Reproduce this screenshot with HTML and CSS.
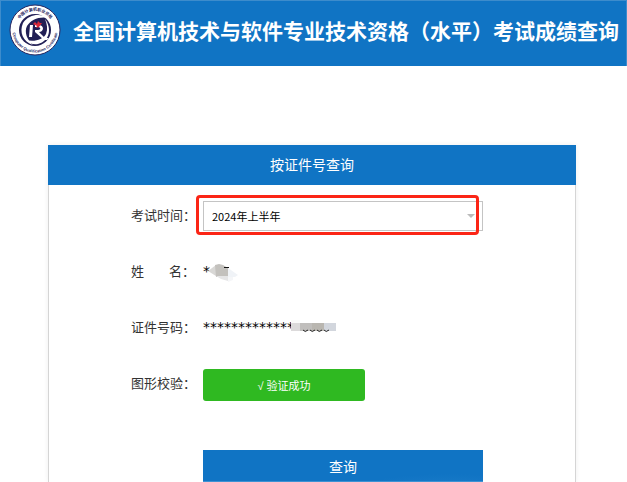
FILE: index.html
```html
<!DOCTYPE html>
<html lang="zh-CN">
<head>
<meta charset="utf-8">
<title>考试成绩查询</title>
<link rel="stylesheet" href="styles.css">
</head>
<body>
<header class="banner">
  <svg class="logo" viewBox="0 0 52 52" aria-hidden="true">
    <defs>
      <path id="arc-top" d="M7 26 A19 19 0 0 1 45 26"/>
      <path id="arc-bottom" d="M5 18 A22.500 22.500 0 1 0 47 18"/>
    </defs>
    <circle cx="26" cy="26" r="25" fill="#fff" stroke="#29265f" stroke-width="1"/>
    <circle cx="26" cy="26" r="16" fill="#211f55"/>
    <text class="ring ring-cn"><textPath href="#arc-top" startOffset="50%" text-anchor="middle">中国计算机职业资格</textPath></text>
    <text class="ring ring-en"><textPath href="#arc-bottom" startOffset="50%" text-anchor="middle">Computer Qualification Certificate</textPath></text>
    <path d="M40 14 C31 9 20 10 14 19 C10 28 14 38 24 41 C18 36 15 28 18 22 C22 15 31 12 40 14Z" fill="#fff"/>
    <path d="M36 15 C43 24 41 37 29 40 C24 41 20 39 17 36 C25 38 34 36 37 30 C39 25 38 20 36 15Z" fill="#fff"/>
    <path d="M21 21 H24 L23 33 H20Z" fill="#fff"/>
    <path d="M26 21 H29 C36 21 35 28 30 28 L36 34 H40 L38 36 H35 L26 28 V26 H29 C32 26 32 23 29 23 H26Z" fill="#fff"/>
    <path d="M24 20 L26 18 L28 20 L29 17 L31 19 L33 19 L30 23 L27 24 L28 22Z" fill="#d92838"/>
  </svg>
  <h1 class="title">全国计算机技术与软件专业技术资格（水平）考试成绩查询</h1>
</header>
<main class="panel">
  <h2 class="panel-head">按证件号查询</h2>
  <form class="form">
    <div class="row">
      <label class="label" for="exam">考试时间：</label>
      <div class="field">
        <select class="select" id="exam"><option>2024年上半年</option></select>
        <svg class="arrow" viewBox="0 0 8 4" aria-hidden="true"><path d="M0 0H8L4 4Z" fill="#bbb"/></svg>
        <span class="highlight"></span>
      </div>
    </div>
    <div class="row">
      <span class="label label-name"><span>姓</span><span>名：</span></span>
      <div class="field value">*
        <svg class="mask mask-name" viewBox="0 0 32 18" aria-hidden="true">
          <path d="M0 7L8 1V12Z" fill="#d8d7d5"/>
          <path d="M7 1L11 0L15 1L20 4V13H8Z" fill="#c3c1bd"/>
          <path d="M16 3H21V4H16Z" fill="#111"/>
          <path d="M20 4L30 11L27 13H20Z" fill="#f0f3f7"/>
          <path d="M8 12H20V17L13 15Z" fill="#e5e5e6"/>
          <path d="M20 13H25V16L20 18Z" fill="#f5f6f8"/>
        </svg>
      </div>
    </div>
    <div class="row">
      <span class="label">证件号码：</span>
      <div class="field value">*************
        <svg class="mask mask-id" viewBox="0 0 46 11" aria-hidden="true">
          <path d="M0 0H9V3H0Z" fill="#fafafa"/>
          <path d="M0 3H9V11H0Z" fill="#dcdadb"/>
          <path d="M9 3H21V11H9Z" fill="#c0bebc"/>
          <path d="M21 3H33V11H21Z" fill="#b9b6b0"/>
          <path d="M33 3H45V11H33Z" fill="#d2d6dd"/>
          <path d="M12 10q2 3 5 0M19 10q2 3 5 0M26 10q2 3 5 0M33 10q2 3 5 0" fill="none" stroke="#222"/>
        </svg>
      </div>
    </div>
    <div class="row">
      <span class="label">图形校验：</span>
      <div class="field"><button class="verify" type="button">√ 验证成功</button></div>
    </div>
    <div class="row row-submit">
      <div class="field"><button class="submit" type="submit">查询</button></div>
    </div>
  </form>
</main>
</body>
</html>
```
FILE: styles.css
```css
* {
  box-sizing: border-box;
}

body {
  margin: 0;
  min-height: 100vh;
  display: flex;
  flex-direction: column;
  background: #fff;
  color: #333;
  font-family: "Noto Sans CJK SC", sans-serif;
  font-size: 13px;
}

.banner {
  display: flex;
  align-items: center;
  gap: 12px;
  height: 66px;
  padding: 0 0 8px 8px;
  border: 1px solid #3d8ccc;
  border-bottom: 0;
  background: #1074c4;
}

.logo {
  flex: none;
  width: 52px;
  height: 52px;
}

.ring {
  fill: #29265f;
  font-weight: 700;
}

.ring-cn {
  font-size: 4px;
}

.ring-en {
  font-family: "Liberation Sans", sans-serif;
  font-size: 4px;
}

.title {
  margin: 0;
  color: #fff;
  font-size: 21px;
  line-height: 32px;
  white-space: nowrap;
}

.panel {
  flex: 1;
  margin: 79px 51px 0 48px;
  border: 1px solid #d5d5d5;
  border-width: 0 1px;
  box-shadow: 0 0 5px #eee;
}

.panel-head {
  margin: 0 -1px;
  padding-bottom: 2px;
  background: #1074c4;
  color: #fff;
  font-size: 14px;
  font-weight: 400;
  line-height: 38px;
  text-align: center;
}

.form {
  display: flex;
  flex-direction: column;
  gap: 24px;
  padding: 16px 92px 0 82px;
}

.row {
  display: flex;
  align-items: flex-start;
  height: 32px;
  line-height: 28px;
}

.row-submit {
  justify-content: flex-end;
  margin-top: 25px;
}

.label {
  flex: none;
  width: 72px;
}

.label-name {
  display: flex;
  gap: 25px;
}

.field {
  position: relative;
  flex: 1;
}

.row-submit .field {
  margin-left: 72px;
}

.select {
  display: block;
  width: 100%;
  height: 30px;
  padding: 0 8px;
  border: 1px solid #c4c4c4;
  border-radius: 0;
  appearance: none;
  background: #fff;
  color: #000;
  font: inherit;
  font-size: 11px;
}

.arrow {
  position: absolute;
  top: 13px;
  right: 8px;
  width: 8px;
  height: 4px;
}

.highlight {
  position: absolute;
  inset: -6px 4px -4px -7px;
  border: 3px solid #fb2516;
  border-radius: 4px;
  pointer-events: none;
}

.value {
  color: #000;
  font-family: "DejaVu Sans", sans-serif;
  font-size: 14px;
}

.mask {
  position: absolute;
  overflow: visible;
}

.mask-name {
  top: 7px;
  left: 5px;
  width: 32px;
  height: 18px;
}

.mask-id {
  top: 7px;
  left: 88px;
  width: 46px;
  height: 11px;
}

.verify {
  display: block;
  width: 162px;
  height: 32px;
  border: 0;
  border-radius: 3px;
  background: #2fb921;
  color: #fff;
  font-family: "Liberation Sans", "Noto Sans CJK SC", sans-serif;
  font-size: 11px;
}

.submit {
  display: block;
  width: 100%;
  height: 32px;
  border: 0;
  border-bottom: 1px solid #3d92d3;
  background: radial-gradient(ellipse at 88% 120%, #1a7bc9, #1074c4 25%);
  color: #fff;
  font: inherit;
  font-size: 14px;
}
```
